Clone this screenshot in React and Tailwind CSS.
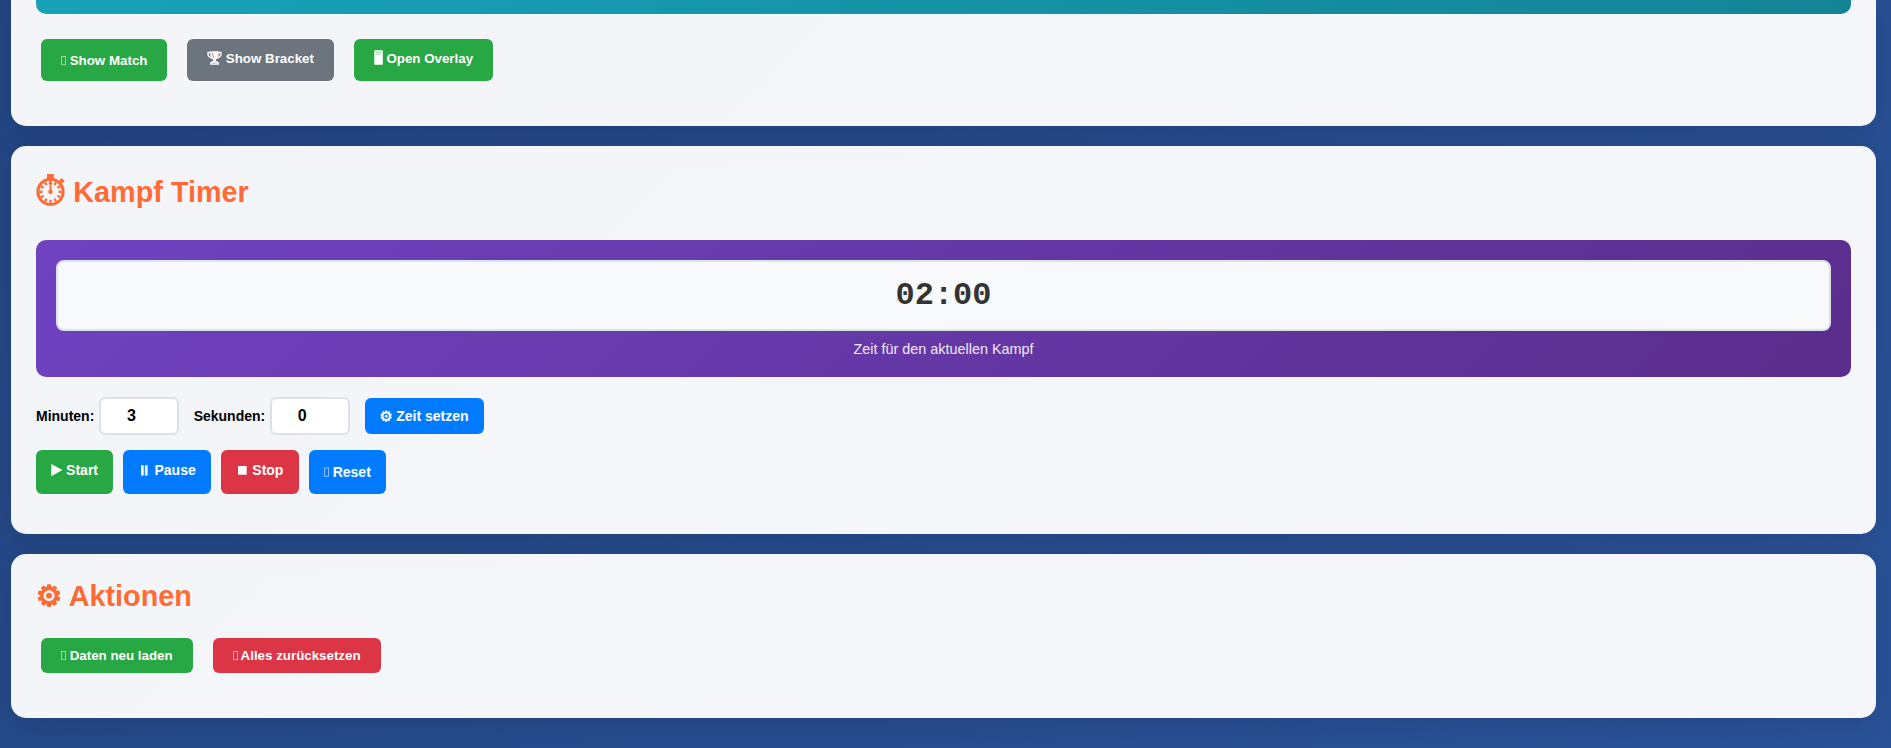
const tones = {
  green: 'bg-[#28a745]',
  gray: 'bg-[#6c757d]',
  blue: 'bg-[#007bff]',
  red: 'bg-[#dc3545]',
};

function Icon({ className, children }) {
  return (
    <svg className={`block shrink-0 overflow-visible ${className}`} fill="currentColor" aria-hidden="true">
      {children}
    </svg>
  );
}

function EmptyGlyph({ y = 3.5, className = 'w-[8.7px]' }) {
  return (
    <Icon className={`h-4 ${className}`}>
      <rect x="0.6" y={y} width="4" height="8.2" fill="none" stroke="currentColor" strokeWidth="0.8" opacity="0.65" />
    </Icon>
  );
}

function TrophyIcon() {
  return (
    <Icon className="h-4 w-[18.8px]">
      <path d="M3.2 0.3H11.8V2.5C11.8 5.4 10.6 7.6 9 8.5V10.2H10.6V11.2H11.9V13.7H3.1V11.2H4.4V10.2H6V8.5C4.4 7.6 3.2 5.4 3.2 2.5Z" />
      <path d="M3.8 1.5H1V3C1 5 2.6 6.5 5.2 7.2M11.2 1.5H14V3C14 5 12.4 6.5 9.8 7.2" fill="none" stroke="currentColor" strokeWidth="1.4" />
      <path d="M5.4 1.8C5.5 4 6 5.4 7 6.6" fill="none" stroke="#6c757d" strokeWidth="0.8" />
      <path d="M5.2 12.3H9.8" stroke="#6c757d" strokeWidth="0.5" />
    </Icon>
  );
}

function ServerIcon() {
  return (
    <Icon className="h-4 w-[12.4px]">
      <rect x="0.3" y="-0.8" width="8.5" height="14.6" rx="0.5" />
      <path d="M1.8 1.5H7.3M1.8 3.2H7.3" stroke="#28a745" strokeWidth="0.6" opacity="0.7" />
    </Icon>
  );
}

const teeth = [0, 36, 72, 108, 144, 180, 216, 252, 288, 324];

function GearShape({ cx, cy, scale }) {
  return (
    <g transform={`translate(${cx} ${cy}) scale(${scale})`}>
      {teeth.map((angle) => (
        <path key={angle} d="M-2.4 -8L-1.8 -11.4H1.8L2.4 -8Z" transform={`rotate(${angle})`} />
      ))}
      <circle r="7.3" fill="none" stroke="currentColor" strokeWidth="3.6" />
      <circle r="2.9" />
    </g>
  );
}

function StopwatchIcon() {
  return (
    <Icon className="h-8 w-[37.3px]">
      <circle cx="14.5" cy="15.8" r="12.6" fill="none" stroke="currentColor" strokeWidth="3" />
      <rect x="11" y="-2" width="6.8" height="4.6" />
      <path d="M23 7L26.6 3.9" stroke="currentColor" strokeWidth="2.2" />
      <path d="M24.4 3.2L27.6 6.2" stroke="currentColor" strokeWidth="3" />
      {[30, 60, 90, 120, 150, 180, 210, 240, 270, 300, 330].map((angle) => (
        <rect key={angle} x="13.3" y="4.8" width="2.4" height="3" transform={`rotate(${angle} 14.5 15.8)`} />
      ))}
      <path d="M13.6 15.8V8.2H12.2L14.5 3.6L16.8 8.2H15.4V15.8Z" />
      <circle cx="14.5" cy="15.8" r="2.2" />
    </Icon>
  );
}

function Card({ className, children }) {
  return (
    <section className={`shrink-0 bg-white/95 px-[25px] shadow-[0_8px_32px_rgba(0,0,0,0.1)] ${className}`}>
      {children}
    </section>
  );
}

function Button({ tone, className, children }) {
  return (
    <button
      className={`flex items-start justify-start whitespace-nowrap rounded-[6px] font-bold leading-4 text-white ${tones[tone]} ${className}`}
    >
      {children}
    </button>
  );
}

function NumberField({ label, value }) {
  return (
    <label className="flex items-center text-[14px] font-bold leading-4 text-black">
      <span className="mr-[5px]">{label}</span>
      <input
        type="number"
        defaultValue={value}
        className="h-[38px] w-[80px] rounded-[6px] border-2 border-[#dee2e6] bg-white py-2 pl-2 pr-[9px] text-center text-[16px] font-bold leading-[18px]"
      />
    </label>
  );
}

export default function App() {
  return (
    <main className="flex h-[748px] flex-col gap-5 overflow-hidden bg-linear-[135deg,#1e3c72_-80%,#2a5298_100%] pl-[11px] pr-[15px] font-['Liberation_Sans',Arial,sans-serif]">
      <Card className="h-[126px] rounded-b-[15px]">
        <div className="h-[14px] rounded-b-[10px] bg-linear-[135deg,#17a2b8,#138496]" />
        <div className="mt-[25px] flex gap-5 px-[5px] text-[13.333px]">
          <Button tone="green" className="h-[42px] w-[126px] pl-5 pt-[14px]"><EmptyGlyph />Show Match</Button>
          <Button tone="gray" className="h-[42px] w-[147px] pl-5 pt-3"><TrophyIcon />Show Bracket</Button>
          <Button tone="green" className="h-[42px] w-[139px] pl-5 pt-3"><ServerIcon />Open Overlay</Button>
        </div>
      </Card>

      <Card className="h-[388px] rounded-[15px]">
        <h2 className="flex h-[94px] pt-[30px] text-[28.8px] font-bold leading-[32px] text-[#ff6b35]"><StopwatchIcon />Kampf Timer</h2>
        <div className="h-[137px] rounded-[10px] bg-linear-[135deg,#6f42c1,#5a2d8c] p-5 text-center">
          <div className="h-[71px] rounded-[8px] border-2 border-[#dee2e6] bg-[#f8f9fa] pt-4 font-['Liberation_Mono',monospace] text-[32px] font-bold leading-[36px] text-[#333]">
            02:00
          </div>
          <p className="mt-[10px] text-[14.4px] leading-4 text-white/90">Zeit für den aktuellen Kampf</p>
        </div>
        <div className="mt-5 flex items-center text-[14px]">
          <NumberField label="Minuten:" value={3} />
          <div className="ml-[14.3px]">
            <NumberField label="Sekunden:" value={0} />
          </div>
          <Button tone="blue" className="ml-[15px] h-9 w-[119px] pl-[15px] pt-[10px]">
            <Icon className="h-4 w-4"><GearShape cx={6.2} cy={8.2} scale={0.5} /></Icon>
            Zeit setzen
          </Button>
        </div>
        <div className="mt-[15px] flex gap-[10px] text-[14px]">
          <Button tone="green" className="h-11 w-[77px] pl-[15px] pt-3">
            <Icon className="h-4 w-[15.1px]"><path d="M0.3 1.9L11.3 8.1L0.3 14.3Z" /></Icon>
            Start
          </Button>
          <Button tone="blue" className="h-11 w-[88px] pl-[15px] pt-3">
            <Icon className="h-4 w-[16.5px]"><path d="M3 3.3H5.7V13.4H3ZM6.9 3.3H9.6V13.4H6.9Z" /></Icon>
            Pause
          </Button>
          <Button tone="red" className="h-11 w-[78px] pl-[15px] pt-3">
            <Icon className="h-4 w-[16.3px]"><rect x="2" y="4" width="8.7" height="8.7" /></Icon>
            Stop
          </Button>
          <Button tone="blue" className="h-11 w-[77px] pl-[15px] pt-[14px]"><EmptyGlyph y={4} />Reset</Button>
        </div>
      </Card>

      <Card className="h-[164px] rounded-[15px]">
        <h2 className="flex h-[84px] pt-[26px] text-[28.8px] font-bold leading-[32px] text-[#ff6b35]">
          <Icon className="h-8 w-[32.7px]"><GearShape cx={13} cy={15.7} scale={1} /></Icon>
          Aktionen
        </h2>
        <div className="flex gap-5 px-[5px] text-[13.333px]">
          <Button tone="green" className="h-[35px] w-[152px] pl-5 pt-[10px]"><EmptyGlyph />Daten neu laden</Button>
          <Button tone="red" className="h-[35px] w-[168px] pl-[19.6px] pt-[10px]"><EmptyGlyph className="w-2" />Alles zurücksetzen</Button>
        </div>
      </Card>
    </main>
  );
}
